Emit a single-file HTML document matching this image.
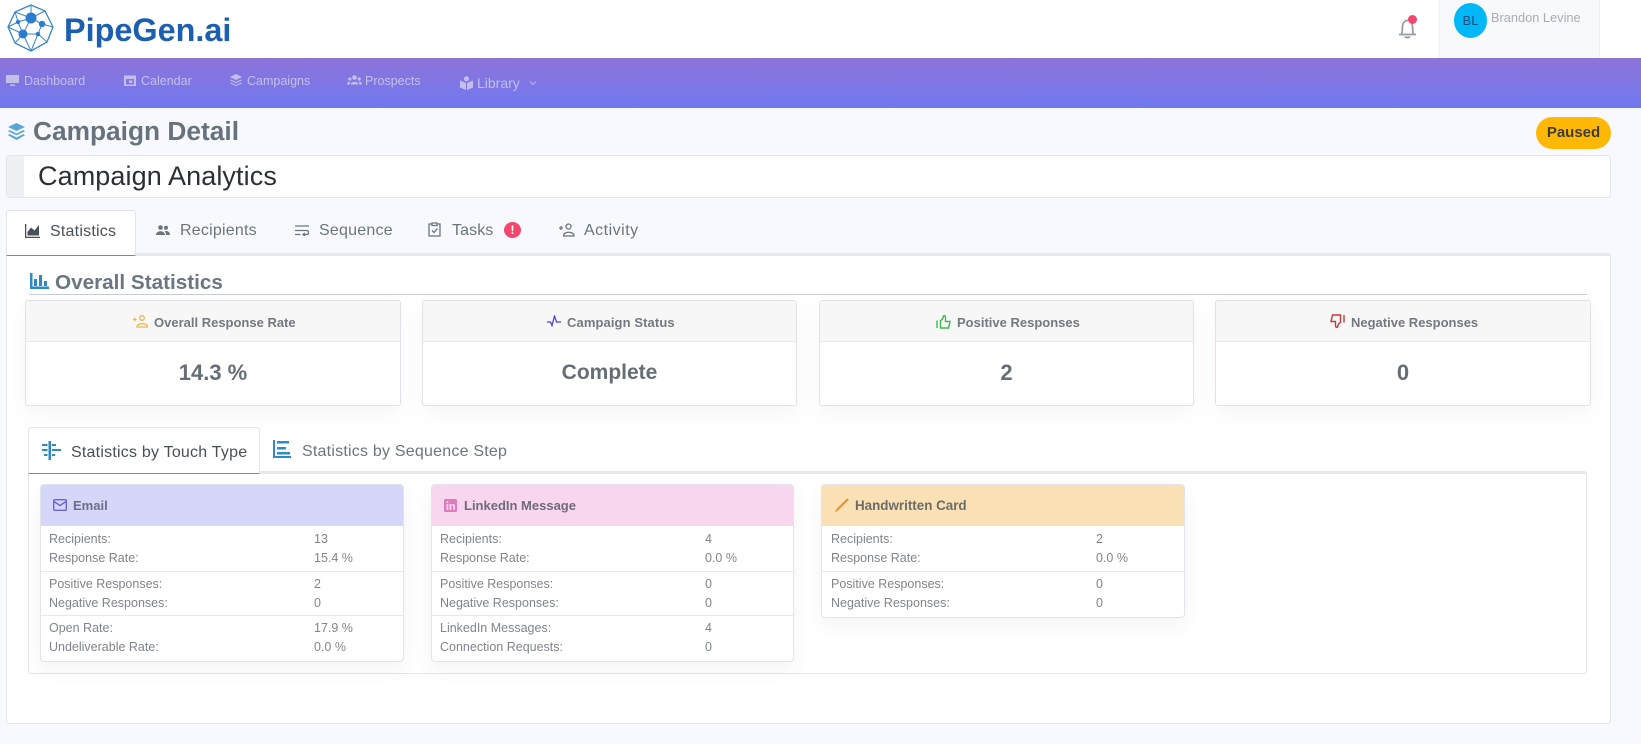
<!DOCTYPE html>
<html lang="en"><head><meta charset="utf-8"><title>Campaign Detail</title>
<style>
*{box-sizing:border-box}
html,body{margin:0;padding:0;width:1641px;height:744px;overflow:hidden;background:#f6f7fb;font-family:"Liberation Sans",sans-serif}
.a,.t,svg{position:absolute}
.t{white-space:nowrap;line-height:20px;height:20px}
.n{font-size:12.500px;color:#c3bfea}
.tab{font-size:16px;letter-spacing:.22px;color:#6c757d}
.sc{background:#fff;border:1px solid #e0e2e6;border-radius:3px;box-shadow:0 8px 20px rgba(60,70,100,.05);top:300px;height:106px}
.sh{left:0;top:0;right:0;height:41px;background:#f7f7f8;border-bottom:1px solid #e6e8ea;border-radius:3px 3px 0 0}
.lb{font-size:13px;font-weight:bold;color:#73797f;top:313px}
.v{font-size:22px;font-weight:bold;color:#666d75;top:363px;text-align:center;line-height:20px}
.tc{background:#fff;border:1px solid #e2e4e8;border-radius:4px;top:484px;box-shadow:0 8px 20px rgba(60,70,100,.06)}
.th{left:0;top:0;right:0;height:41px;border-radius:3px 3px 0 0}
.ht{font-weight:bold;top:496px}
.r{font-size:12.500px;color:#80858c}
.d{height:1px;background:#e8eaed}
</style></head><body>

<div class="a" style="left:0;top:0;width:1641px;height:58px;background:#fff"></div>
<svg style="left:6px;top:3px" width="50" height="50" viewBox="6 3 50 50" fill="none" stroke="#3a86cc" stroke-width="1">
<path d="M31 5L45 11L53 27L47 42L31 51L15 43L8 27L15 12Z" stroke-width="1.300"/>
<path d="M31 5V18L45 11M31 18L15 12M18 22L8 27M31 18L18 22M31 18L42 24L53 27M18 22L15 12M18 22L23 34L8 27M23 34L15 43M23 34L31 51M23 34H38L31 51M38 34L47 42M38 34L42 24M31 18L23 34"/>
<g fill="#2a7ccf" stroke="none"><circle cx="31" cy="18" r="5.500"/><circle cx="23" cy="34" r="4.500"/><circle cx="42" cy="24" r="3.200"/><circle cx="38" cy="34" r="2.300"/><circle cx="18" cy="22" r="2.200"/></g>
</svg>
<div class="t" style="left:64px;top:14px;font-size:32.400px;line-height:32px;height:32px;font-weight:bold;color:#1c5fb1">PipeGen.ai</div>

<svg style="left:1397px;top:17px" width="22" height="22" viewBox="0 0 22 22" fill="none" stroke="#969ca3" stroke-width="1.800"><path d="M2 17.500H19M4.500 17.500C6 14 5 12 5.500 9C6 5.500 8 3.500 10.500 3.500S15 5.500 15.500 9C16 12 15 14 16.500 17.500M8 19.500C9 21 12 21 13 19.500"/></svg>
<div class="a" style="left:1408px;top:15px;width:9px;height:9px;border-radius:50%;background:#f5466f"></div>
<div class="a" style="left:1439px;top:0;width:161px;height:58px;background:#f8f9fb;border-left:1px solid #eef0f3;border-right:1px solid #eef0f3"></div>
<div class="a" style="left:1454px;top:3px;width:33px;height:35px;border-radius:50%;background:#00b8f8"></div>
<div class="t" style="left:1454px;top:11px;width:33px;text-align:center;font-size:13px;color:#1c4f7e">BL</div>
<div class="t" style="left:1491px;top:8px;font-size:12.800px;color:#a8adb5">Brandon Levine</div>

<div class="a" style="left:0;top:58px;width:1641px;height:50px;background:linear-gradient(#8d73d8,#7179f1)"></div>
<svg style="left:6px;top:74px" width="13" height="13" viewBox="0 0 13 13" fill="#c3bfea"><path d="M0 1H13V9H0ZM4 10.500H9V12H4Z"/></svg>
<div class="t n" style="left:24px;top:71px">Dashboard</div>
<svg style="left:124px;top:74px" width="12" height="12" viewBox="0 0 12 12" fill="#c3bfea"><path d="M0 1.500H12V12H0ZM2 5V10.500H10V5ZM5 6.500H8.500V9H5Z" fill-rule="evenodd"/></svg>
<div class="t n" style="left:141px;top:71px">Calendar</div>
<svg style="left:230px;top:74px" width="12" height="12" viewBox="0 0 12 12" fill="#c3bfea"><path d="M6 0L12 3L6 6L0 3ZM1 5.500L6 8L11 5.500L12 6.300L6 9.300L0 6.300ZM1 8.500L6 11L11 8.500L12 9.300L6 12L0 9.300Z"/></svg>
<div class="t n" style="left:247px;top:71px">Campaigns</div>
<svg style="left:347px;top:75px" width="15" height="10" viewBox="0 0 15 10" fill="#c3bfea"><circle cx="7.500" cy="2.500" r="2.300"/><circle cx="2.800" cy="4" r="1.600"/><circle cx="12.200" cy="4" r="1.600"/><path d="M3.500 9.500C4 6 11 6 11.500 9.500ZM0 9.500C0 7 2 6.500 3.300 6.800L2.500 9.500ZM15 9.500C15 7 13 6.500 11.700 6.800L12.500 9.500Z"/></svg>
<div class="t n" style="left:365px;top:71px">Prospects</div>
<svg style="left:460px;top:76px" width="13" height="14" viewBox="0 0 13 14" fill="#c3bfea"><circle cx="6.500" cy="2.800" r="2.500"/><path d="M0 4.500L6 7V14L0 11.500ZM13 4.500L7 7V14L13 11.500Z"/></svg>
<div class="t" style="left:477px;top:73px;font-size:14px;color:#c3bfea">Library</div>
<svg style="left:529px;top:80px" width="8" height="6" viewBox="0 0 8 6" fill="none" stroke="#b4b3ec" stroke-width="1.100"><path d="M1 1.500L4 4.500L7 1.500"/></svg>

<div class="a" style="left:0;top:108px;width:1641px;height:636px;background:#f8f9fe"></div>
<svg style="left:8px;top:123px" width="17" height="17" viewBox="0 0 17 17" fill="#5aa5d8"><path d="M8.500 0L17 4L8.500 8L0 4ZM1.500 7L8.500 10.500L15.500 7L17 8.200L8.500 12.200L0 8.200ZM1.500 11L8.500 14.500L15.500 11L17 12.200L8.500 17L0 12.200Z"/></svg>
<div class="t" style="left:33px;top:116px;height:30px;line-height:30px;font-size:26.300px;font-weight:bold;color:#68727d">Campaign Detail</div>
<div class="a" style="left:1536px;top:117px;width:75px;height:32px;border-radius:16px;background:#ffb806"></div>
<div class="t" style="left:1536px;top:123px;width:75px;text-align:center;font-size:15px;font-weight:bold;color:#3f3d2f">Paused</div>

<div class="a" style="left:6px;top:155px;width:1605px;height:43px;background:#fff;border:1px solid #e4e6ea;border-radius:3px"></div>
<div class="a" style="left:7px;top:156px;width:17px;height:41px;background:#eef0f3"></div>
<div class="t" style="left:38px;top:161px;height:30px;line-height:30px;font-size:27px;letter-spacing:.1px;color:#2b2f36">Campaign Analytics</div>

<div class="a" style="left:6px;top:253px;width:1605px;height:471px;background:#fff;border:1px solid #e2e4e8;border-top:3px solid #e6e8eb;border-radius:3px"></div>
<div class="a" style="left:6px;top:210px;width:130px;height:46px;background:#fff;border:1px solid #e2e4e8;border-bottom:1.500px solid #7380e2;border-radius:3px 3px 0 0"></div>

<svg style="left:25px;top:224px" width="15" height="14" viewBox="0 0 15 14" fill="#4a5058"><path d="M0 0H1.300V12.700H15V14H0ZM2.500 8L6 3.500L9.500 6.500L14 1V11.500H2.500Z"/></svg>
<div class="t tab" style="left:50px;top:222px;color:#495057">Statistics</div>
<svg style="left:156px;top:225px" width="14" height="11" viewBox="0 0 14 11" fill="#6c757d"><circle cx="4.500" cy="2.500" r="2.300"/><circle cx="10" cy="2.800" r="2"/><path d="M0 10C0 5 9 5 9 10ZM10 10C10 8 9.500 7 8.800 6.200C11 5.500 14 6.500 14 10Z"/></svg>
<div class="t tab" style="left:180px;top:221px">Recipients</div>
<svg style="left:295px;top:225px" width="14" height="11" viewBox="0 0 14 11" fill="none" stroke="#6c757d" stroke-width="1.300"><path d="M0 1H14M0 5.500H12C14 5.500 14 9.500 12 9.500H8.500M10 8L8 9.500L10 11M0 9.500H5.500"/></svg>
<div class="t tab" style="left:319px;top:221px">Sequence</div>
<svg style="left:428px;top:222px" width="13" height="15" viewBox="0 0 13 15" fill="none" stroke="#6c757d" stroke-width="1.300"><path d="M4 2H1V14H12V2H9M4 1H9V3.500H4ZM4 8.500L6 10.500L9.500 6.500"/></svg>
<div class="t tab" style="left:452px;top:221px;letter-spacing:.1px">Tasks</div>
<div class="a" style="left:504px;top:222px;width:17px;height:16px;border-radius:50%;background:#f5476e"></div>
<div class="t" style="left:504px;top:220px;width:17px;text-align:center;font-size:12px;font-weight:bold;color:#fff">!</div>
<svg style="left:559px;top:223px" width="16" height="14" viewBox="0 0 16 14" fill="none" stroke="#6c757d" stroke-width="1.300"><circle cx="9.500" cy="3.500" r="2.500"/><path d="M4.500 13H15C15 8 4.500 8 4.500 13Z"/><path d="M0 5H4M2 3V7"/></svg>
<div class="t tab" style="left:584px;top:221px;letter-spacing:.5px">Activity</div>

<svg style="left:30px;top:273px" width="19" height="16" viewBox="0 0 19 16" fill="#2d8ac7"><path d="M0 0H2.500V13.500H19V16H0ZM4 6H7V13H4ZM9 2H12V13H9ZM14 8H17V13H14Z"/></svg>
<div class="t" style="left:55px;top:273px;font-size:20.700px;font-weight:bold;color:#6c7680">Overall Statistics</div>
<div class="a" style="left:29px;top:294px;width:1558px;height:1px;background:#c9ccd0"></div>

<div class="a sc" style="left:25px;width:376px"><div class="a sh"></div></div>
<div class="a sc" style="left:422px;width:375px"><div class="a sh"></div></div>
<div class="a sc" style="left:819px;width:375px"><div class="a sh"></div></div>
<div class="a sc" style="left:1215px;width:376px"><div class="a sh"></div></div>

<svg style="left:133px;top:315px" width="15" height="13" viewBox="0 0 15 13" fill="none" stroke="#f3b64e" stroke-width="1.300"><circle cx="9" cy="3" r="2.300"/><path d="M4 12H14.500C14.500 7.500 4 7.500 4 12Z"/><path d="M0 4.500H3.500M1.700 2.700V6.300"/></svg>
<div class="t lb" style="left:154px">Overall Response Rate</div>
<svg style="left:547px;top:315px" width="14" height="12" viewBox="0 0 14 12" fill="none" stroke="#4d46d8" stroke-width="1.300"><path d="M0 7H3.500L5 10.500L7.500 1L9.500 7H14"/></svg>
<div class="t lb" style="left:567px;letter-spacing:.1px">Campaign Status</div>
<svg style="left:936px;top:314px" width="15" height="15" viewBox="0 0 15 15" fill="none" stroke="#3fb950" stroke-width="1.400"><path d="M1 6.500V14M4.500 6.500V14H12.500L14 7.500H9.500L9.500 3.500C9.500 1.500 7.500 1 7.300 2.500C7 4.500 6 6 4.500 6.500Z"/></svg>
<div class="t lb" style="left:957px">Positive Responses</div>
<svg style="left:1330px;top:314px" width="15" height="15" viewBox="0 0 15 15" fill="none" stroke="#c8383c" stroke-width="1.400"><path d="M14 1V8.500M10.500 8.500V1H2.500L1 7.500H5.500L5.500 11.500C5.500 13.500 7.500 14 7.700 12.500C8 10.500 9 9 10.500 8.500Z"/></svg>
<div class="t lb" style="left:1351px">Negative Responses</div>

<div class="t v" style="left:25px;width:376px">14.3 %</div>
<div class="t v" style="left:422px;width:375px;font-size:21px">Complete</div>
<div class="t v" style="left:819px;width:375px">2</div>
<div class="t v" style="left:1215px;width:376px">0</div>

<div class="a" style="left:28px;top:471px;width:1559px;height:203px;background:#fff;border:1px solid #e2e4e8;border-top:3px solid #e6e8eb;border-radius:3px"></div>
<div class="a" style="left:28px;top:427px;width:232px;height:47px;background:#fff;border:1px solid #e2e4e8;border-bottom:1.500px solid #7380e2;border-radius:3px 3px 0 0"></div>
<svg style="left:42px;top:441px" width="19" height="19" viewBox="0 0 19 19" fill="#2d8ac7"><path d="M6.500 0H9V19H6.500ZM0 3H5.500V5H0ZM0 8H5.500V10H0ZM2 13H5.500V15H2ZM10 3H14V5H10ZM10 8H19V10H10ZM10 13H13V15H10Z"/></svg>
<div class="t tab" style="left:71px;top:443px;color:#495057">Statistics by Touch Type</div>
<svg style="left:273px;top:440px" width="18" height="18" viewBox="0 0 18 18" fill="#2d8ac7"><path d="M0 0H2V16H18V18H0ZM4 1H16V3.500H4ZM4 7H13V9.500H4ZM4 12H17V14.500H4Z"/></svg>
<div class="t tab" style="left:302px;top:442px">Statistics by Sequence Step</div>

<div class="a tc" style="left:40px;width:364px;height:178px"><div class="a th" style="background:#d5d6f9"></div></div>
<div class="a tc" style="left:431px;width:363px;height:178px"><div class="a th" style="background:#f8d6ee"></div></div>
<div class="a tc" style="left:821px;width:364px;height:134px"><div class="a th" style="background:#f9e1b5"></div></div>

<svg style="left:53px;top:499px" width="14" height="12" viewBox="0 0 14 12" fill="none" stroke="#6b63dc" stroke-width="1.400"><rect x=".7" y=".7" width="12.600" height="10.600" rx="1"/><path d="M1 2.500L7 6.500L13 2.500"/></svg>
<div class="t ht" style="left:73px;font-size:13px;color:#6c6f87">Email</div>
<svg style="left:444px;top:499px" width="13" height="13" viewBox="0 0 13 13"><rect width="13" height="13" rx="1.500" fill="#df7bbd"/><path d="M2.500 5H4.300V11H2.500ZM2.500 2.300H4.300V4H2.500ZM5.500 5H7.200V6C8 4.500 11 4.500 11 7V11H9.200V7.500C9.200 6 7.300 6 7.300 7.500V11H5.500Z" fill="#f8d6ee"/></svg>
<div class="t ht" style="left:464px;font-size:13px;color:#6e6b7c">LinkedIn Message</div>
<svg style="left:835px;top:498px" width="14" height="14" viewBox="0 0 14 14" fill="none" stroke="#f2902a" stroke-width="2.200"><path d="M13 1L2 12"/><path d="M2.500 11.500L.5 13.500" stroke-width="1.500"/></svg>
<div class="t ht" style="left:855px;font-size:13.400px;color:#6d6c68">Handwritten Card</div>

<div class="t r" style="left:49px;top:529px">Recipients:</div><div class="t r" style="left:314px;top:529px">13</div>
<div class="t r" style="left:49px;top:548px">Response Rate:</div><div class="t r" style="left:314px;top:548px">15.4 %</div>
<div class="a d" style="left:41px;top:571px;width:362px"></div>
<div class="t r" style="left:49px;top:574px">Positive Responses:</div><div class="t r" style="left:314px;top:574px">2</div>
<div class="t r" style="left:49px;top:593px">Negative Responses:</div><div class="t r" style="left:314px;top:593px">0</div>
<div class="a d" style="left:41px;top:615px;width:362px"></div>
<div class="t r" style="left:49px;top:618px">Open Rate:</div><div class="t r" style="left:314px;top:618px">17.9 %</div>
<div class="t r" style="left:49px;top:637px">Undeliverable Rate:</div><div class="t r" style="left:314px;top:637px">0.0 %</div>

<div class="t r" style="left:440px;top:529px">Recipients:</div><div class="t r" style="left:705px;top:529px">4</div>
<div class="t r" style="left:440px;top:548px">Response Rate:</div><div class="t r" style="left:705px;top:548px">0.0 %</div>
<div class="a d" style="left:432px;top:571px;width:361px"></div>
<div class="t r" style="left:440px;top:574px">Positive Responses:</div><div class="t r" style="left:705px;top:574px">0</div>
<div class="t r" style="left:440px;top:593px">Negative Responses:</div><div class="t r" style="left:705px;top:593px">0</div>
<div class="a d" style="left:432px;top:615px;width:361px"></div>
<div class="t r" style="left:440px;top:618px">LinkedIn Messages:</div><div class="t r" style="left:705px;top:618px">4</div>
<div class="t r" style="left:440px;top:637px">Connection Requests:</div><div class="t r" style="left:705px;top:637px">0</div>

<div class="t r" style="left:831px;top:529px">Recipients:</div><div class="t r" style="left:1096px;top:529px">2</div>
<div class="t r" style="left:831px;top:548px">Response Rate:</div><div class="t r" style="left:1096px;top:548px">0.0 %</div>
<div class="a d" style="left:822px;top:571px;width:362px"></div>
<div class="t r" style="left:831px;top:574px">Positive Responses:</div><div class="t r" style="left:1096px;top:574px">0</div>
<div class="t r" style="left:831px;top:593px">Negative Responses:</div><div class="t r" style="left:1096px;top:593px">0</div>

</body></html>
